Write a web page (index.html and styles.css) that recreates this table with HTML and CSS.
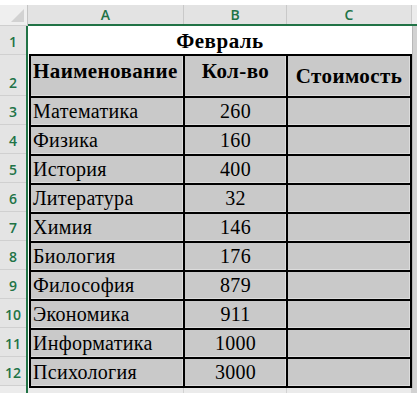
FILE: index.html
```html
<!DOCTYPE html>
<html lang="ru">
<head>
<meta charset="utf-8">
<title>Февраль</title>
<link rel="stylesheet" href="styles.css">
</head>
<body>
<div class="sheet">
  <div class="corner"><span class="tri"></span></div>
  <div class="colhead">
    <div class="ch">A</div>
    <div class="ch">B</div>
    <div class="ch">C</div>
    <div class="ch dh"></div>
  </div>
  <div class="rowhead">
    <div class="rh">1</div>
    <div class="rh">2</div>
    <div class="rh">3</div>
    <div class="rh">4</div>
    <div class="rh">5</div>
    <div class="rh">6</div>
    <div class="rh">7</div>
    <div class="rh">8</div>
    <div class="rh">9</div>
    <div class="rh">10</div>
    <div class="rh">11</div>
    <div class="rh">12</div>
    <div class="rh last"></div>
  </div>
  <div class="body">
    <div class="titlerow">
      <div class="title">Февраль</div>
      <div class="dcol"></div>
    </div>
    <div class="tablerow">
      <div class="table">
        <div class="cell head top left">Наименование</div>
        <div class="cell head top center">Кол-во</div>
        <div class="cell head middle center">Стоимость</div>

        <div class="cell">Математика</div><div class="cell num">260</div><div class="cell"></div>
        <div class="cell">Физика</div><div class="cell num">160</div><div class="cell"></div>
        <div class="cell">История</div><div class="cell num">400</div><div class="cell"></div>
        <div class="cell">Литература</div><div class="cell num">32</div><div class="cell"></div>
        <div class="cell">Химия</div><div class="cell num">146</div><div class="cell"></div>
        <div class="cell">Биология</div><div class="cell num">176</div><div class="cell"></div>
        <div class="cell">Философия</div><div class="cell num">879</div><div class="cell"></div>
        <div class="cell">Экономика</div><div class="cell num">911</div><div class="cell"></div>
        <div class="cell">Информатика</div><div class="cell num">1000</div><div class="cell"></div>
        <div class="cell">Психология</div><div class="cell num">3000</div><div class="cell"></div>
      </div>
      <div class="dcol"></div>
    </div>
    <div class="afterrow">
      <div class="ac a"></div>
      <div class="ac b"></div>
      <div class="ac c"></div>
      <div class="ac d"></div>
    </div>
  </div>
</div>
</body>
</html>
```
FILE: styles.css
```css
* { box-sizing: border-box; }
html, body { margin: 0; padding: 0; background: #ffffff; }
body { width: 417px; height: 393px; overflow: hidden; }

.sheet {
  margin-top: 5px;
  display: grid;
  grid-template-columns: 28px 389px;
  grid-template-rows: 21px 367px;
}

/* corner */
.corner {
  position: relative;
  background: #efefef;
  border-right: 1px solid #c4c4c4;
  border-bottom: 1px solid #cfcfcf;
}
.corner .tri {
  position: absolute;
  right: 3px;
  bottom: 3px;
  width: 13px;
  height: 13px;
  background: #d2d2d2;
  clip-path: polygon(100% 0, 100% 100%, 0 100%);
}

/* column headers */
.colhead {
  display: grid;
  grid-template-columns: 156px 103px 125px 5px;
  background: #e3e3e3;
  border-bottom: 2px solid #217346;
}
.ch {
  display: flex;
  align-items: center;
  justify-content: center;
  border-right: 1px solid #c9c9c9;
  font-family: "Open Sans", "Liberation Sans", sans-serif;
  font-weight: 600;
  font-size: 14px;
  line-height: 15px;
  color: #217346;
}
.ch.dh { border-right: none; background: #ececec; }

/* row headers */
.rowhead {
  display: grid;
  grid-template-rows: 29px 41px repeat(10, 29px) 7px;
  background: #e4e4e4;
  border-right: 2px solid #217346;
}
.rh {
  display: flex;
  align-items: flex-end;
  justify-content: center;
  padding-bottom: 5px;
  border-bottom: 1px solid #d0d0d0;
  font-family: "Open Sans", "Liberation Sans", sans-serif;
  font-weight: 600;
  font-size: 14px;
  line-height: 15px;
  color: #217346;
}
.rh.last { border-bottom: none; background: #ececec; }

/* body */
.body {
  display: flex;
  flex-direction: column;
  font-family: "Liberation Serif", "Times New Roman", serif;
  font-size: 20px;
  letter-spacing: 0.3px;
  line-height: 21px;
  color: #000;
}
.titlerow {
  display: grid;
  grid-template-columns: 384px 5px;
  height: 28px;
}
.title {
  display: flex;
  align-items: flex-end;
  justify-content: center;
  padding-bottom: 2px;
  font-weight: bold;
  font-size: 21px;
  letter-spacing: 0.5px;
  background: #ffffff;
}
.dcol {
  background: #d2d2d2;
  border-left: 1px solid #b8b8b8;
}

.tablerow {
  display: grid;
  grid-template-columns: 1px 383px 5px;
  height: 334px;
}
.tablerow::before { content: ""; background: #ffffff; }

.table {
  display: grid;
  grid-template-columns: 152px 101px 122px;
  grid-template-rows: 40px repeat(10, 27px);
  gap: 2px;
  padding: 2px;
  background: #000000;
}
.cell {
  display: flex;
  align-items: flex-end;
  padding: 0 2px 3px 2px;
  background: #c9c9c9;
  box-shadow: inset -1px -1px 0 #dcdcdc;
  white-space: nowrap;
}
.cell.num { justify-content: center; }
.cell.head {
  font-weight: bold;
  font-size: 21px;
  letter-spacing: 0.4px;
  padding-bottom: 0;
}
.cell.head.top { align-items: flex-start; padding-top: 5px; }
.cell.head.middle { align-items: center; padding-top: 0; }
.cell.head.center { justify-content: center; }

.afterrow {
  display: grid;
  grid-template-columns: 156px 103px 125px 5px;
  height: 5px;
  background: #ebebeb;
}
.ac { border-right: 1px solid #d2d2d2; }
.ac.d { border-right: none; background: #d2d2d2; }
```
